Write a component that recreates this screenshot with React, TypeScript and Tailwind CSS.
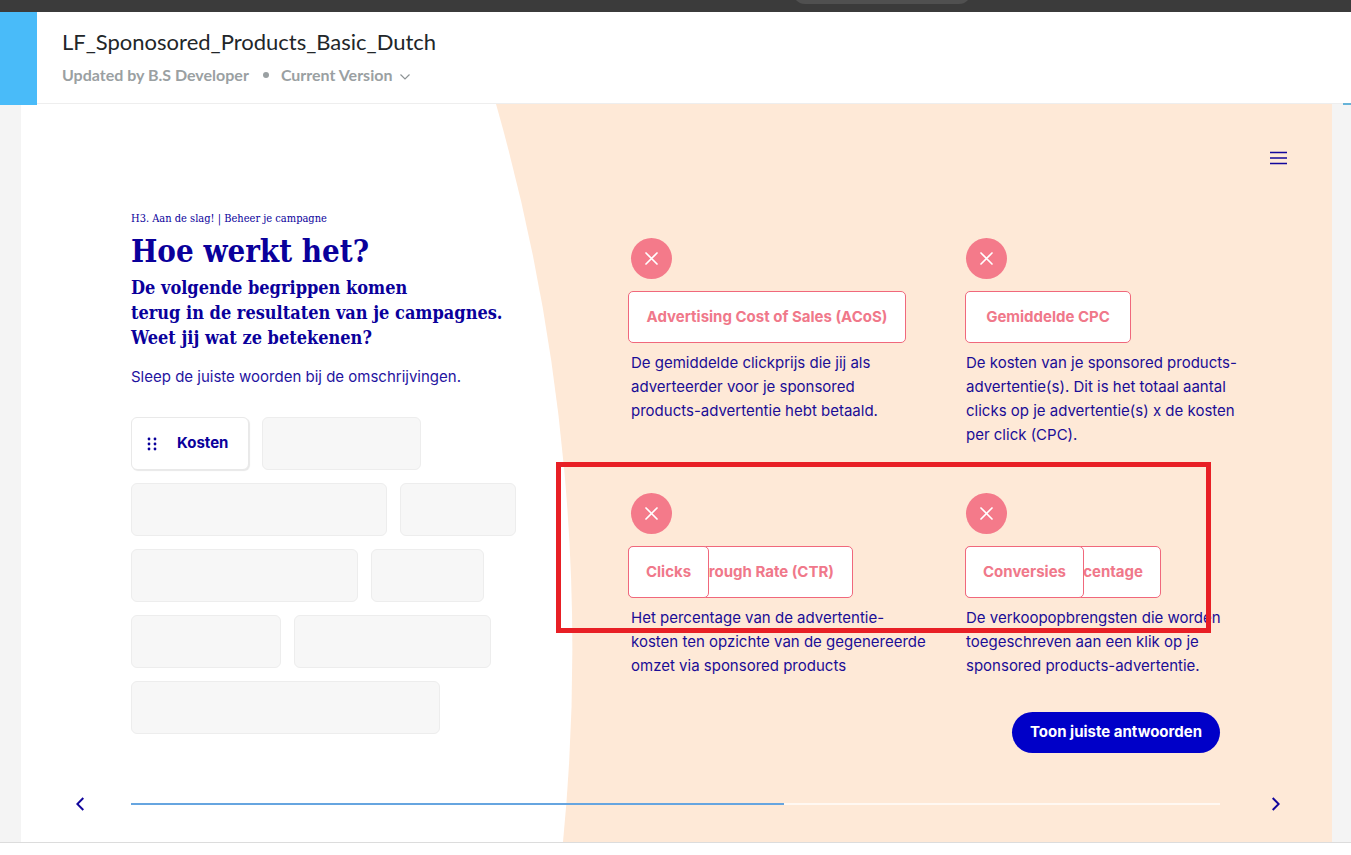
import type { ReactNode } from "react";

const slab = "font-['DejaVu_Serif_Condensed','DejaVu_Serif',serif]";

function Lines({ lines }: { lines: string[] }) {
  return (
    <>
      {lines.map((line) => (
        <span key={line} className="block whitespace-nowrap">
          {line}
        </span>
      ))}
    </>
  );
}

function Slot({ size }: { size: string }) {
  return <div className={`h-[53px] rounded-md border border-[#ededed] bg-[#f7f7f7] ${size}`} />;
}

function WrongBadge() {
  return (
    <span className="flex size-[41px] items-center justify-center rounded-full bg-[#f47a8a]">
      <svg viewBox="0 0 13 13" className="size-[13px]" fill="none" stroke="#fff" strokeWidth="1.7" strokeLinecap="round" aria-label="Onjuist">
        <path d="M1 1 12 12M12 1 1 12" />
      </svg>
    </span>
  );
}

function Answer({ size, children }: { size: string; children: ReactNode }) {
  return (
    <button
      type="button"
      className={`flex h-[52px] items-center whitespace-nowrap rounded-[5px] border border-[#f0687c] bg-white text-[15px] font-bold text-[#f0788a] ${size}`}
    >
      {children}
    </button>
  );
}

function Target({ inset, answer, lines }: { inset: string; answer: ReactNode; lines: string[] }) {
  return (
    <div className="flex flex-col gap-3">
      <div className={inset}>
        <WrongBadge />
      </div>
      <div className="relative flex">{answer}</div>
      <p className={`-mt-1 text-[15px] leading-6 text-[#1a0d96] ${inset}`}>
        <Lines lines={lines} />
      </p>
    </div>
  );
}

export default function App() {
  return (
    <div className="min-h-screen bg-white font-[Inter,sans-serif]">
      <div className="flex h-3 justify-center overflow-hidden bg-[#3b3b3b]">
        <div className="-mt-5 ml-[412px] h-6 w-[178px] rounded-xl bg-[#505050]" />
      </div>

      <header className="relative z-10 flex h-[92px] items-start border-b border-[#eeeeee] bg-white font-[Lato,sans-serif]">
        <div className="h-[93px] w-[37px] shrink-0 bg-[#49bbf9]" />
        <div className="flex-1 pl-[25px] pt-[15px]">
          <h1 className="text-[22px] leading-[30px] text-[#222629]">LF_Sponosored_Products_Basic_Dutch</h1>
          <div className="mt-[6px] flex items-center text-[16px] font-bold leading-6 text-[#9aa0a2]">
            <span>Updated by B.S Developer</span>
            <span className="ml-[14px] mr-3 size-[6px] rounded-full bg-[#9aa0a2]" />
            <button type="button" className="flex items-center gap-2">
              Current Version
              <svg viewBox="0 0 10 6" className="mt-1 h-[6px] w-[10px]" fill="none" stroke="#8d9395" strokeWidth="1.2">
                <path d="M.5.5 5 5 9.500.5" />
              </svg>
            </button>
          </div>
        </div>
        <div className="-mb-0.5 h-[2px] w-2 self-end bg-[#66b3d8]" />
      </header>

      <main className="border-b border-[#dcdcdc] bg-[#f4f4f4] pl-[21px] pr-[19px]">
        <div className="relative overflow-hidden bg-[#fee9d7] pb-[31px]">
          <svg viewBox="0 0 573 738" className="absolute left-0 top-0 h-full w-[573px]" preserveAspectRatio="none" aria-hidden="true">
            <path d="M0 0H475A1987 1987 0 0 1 542 738H0Z" fill="#fff" />
          </svg>

          <div className="relative">
            <div className="flex justify-end pr-[45px] pt-[47px]">
              <button type="button" aria-label="Menu" className="text-[#12069c]">
                <svg viewBox="0 0 17 14" className="h-[14px] w-[17px]" stroke="currentColor" strokeWidth="1.6">
                  <path d="M0 1.500H17M0 7H17M0 12.500H17" />
                </svg>
              </button>
            </div>

            <div className="flex pl-[110px] pt-[46px]">
              <section className="w-[497px] shrink-0 text-[#0a009b]">
                <p className={`text-[11px] leading-4 ${slab}`}>H3. Aan de slag! | Beheer je campagne</p>
                <h2 className={`mt-1 text-[31px] font-bold leading-10 ${slab}`}>Hoe werkt het?</h2>
                <h3 className={`mt-1 text-[18px] font-bold leading-[25px] ${slab}`}>
                  <Lines lines={["De volgende begrippen komen", "terug in de resultaten van je campagnes.", "Weet jij wat ze betekenen?"]} />
                </h3>
                <p className="mt-[15px] text-[15px] leading-6 text-[#1f149f]">Sleep de juiste woorden bij de omschrijvingen.</p>

                <div className="mt-7 flex flex-col gap-[13px]">
                  <div className="flex gap-[13px]">
                    <button type="button" className="flex h-[53px] w-[118px] items-center gap-5 rounded-md border border-[#e9e9e9] bg-white pl-[15px] text-[15px] font-bold shadow-[1px_1px_1px_#e8e8e8]">
                      <svg viewBox="0 0 10 14" className="h-[14px] w-[10px]" fill="currentColor" aria-hidden="true">
                        <circle cx="2" cy="2" r="1.400" />
                        <circle cx="8" cy="2" r="1.400" />
                        <circle cx="2" cy="7" r="1.400" />
                        <circle cx="8" cy="7" r="1.400" />
                        <circle cx="2" cy="12" r="1.400" />
                        <circle cx="8" cy="12" r="1.400" />
                      </svg>
                      Kosten
                    </button>
                    <Slot size="w-[159px]" />
                  </div>
                  <div className="flex gap-[13px]">
                    <Slot size="w-[256px]" />
                    <Slot size="w-[116px]" />
                  </div>
                  <div className="flex gap-[13px]">
                    <Slot size="w-[227px]" />
                    <Slot size="w-[113px]" />
                  </div>
                  <div className="flex gap-[13px]">
                    <Slot size="w-[150px]" />
                    <Slot size="w-[197px]" />
                  </div>
                  <Slot size="w-[309px]" />
                </div>
              </section>

              <section className="min-w-0 flex-1 pr-28 pt-[27px]">
                <div className="relative grid grid-cols-[337px_1fr] gap-y-[46px]">
                  <Target
                    inset="ml-[3px]"
                    answer={<Answer size="w-[278px] justify-center">Advertising Cost of Sales (ACoS)</Answer>}
                    lines={["De gemiddelde clickprijs die jij als", "adverteerder voor je sponsored", "products-advertentie hebt betaald."]}
                  />
                  <Target
                    inset="ml-px"
                    answer={<Answer size="w-[166px] justify-center">Gemiddelde CPC</Answer>}
                    lines={["De kosten van je sponsored products-", "advertentie(s). Dit is het totaal aantal", "clicks op je advertentie(s) x de kosten", "per click (CPC)."]}
                  />
                  <Target
                    inset="ml-[3px]"
                    answer={
                      <>
                        <Answer size="w-[225px] justify-end pr-[18px]">rough Rate (CTR)</Answer>
                        <Answer size="absolute left-0 top-0 w-[81px] justify-center">Clicks</Answer>
                      </>
                    }
                    lines={["Het percentage van de advertentie-", "kosten ten opzichte van de gegenereerde", "omzet via sponsored products"]}
                  />
                  <Target
                    inset="ml-px"
                    answer={
                      <>
                        <Answer size="w-[196px] justify-end pr-[17px]">centage</Answer>
                        <Answer size="absolute left-0 top-0 w-[119px] justify-center">Conversies</Answer>
                      </>
                    }
                    lines={["De verkoopopbrengsten die worden", "toegeschreven aan een klik op je", "sponsored products-advertentie."]}
                  />
                  <div className="pointer-events-none absolute -left-[72px] top-[224px] h-[171px] w-[655px] border-5 border-[#e81f25]" />
                </div>
                <div className="mt-[34px] flex justify-end">
                  <button type="button" className="h-[41px] w-[208px] whitespace-nowrap rounded-full bg-[#0000c8] text-[15px] font-bold text-white">
                    Toon juiste antwoorden
                  </button>
                </div>
              </section>
            </div>

            <nav className="mt-11 flex items-center pl-[55px] pr-[52px] text-[#12069c]" aria-label="Voortgang">
              <button type="button" aria-label="Vorige">
                <svg viewBox="0 0 8 14" className="h-[14px] w-2" fill="none" stroke="currentColor" strokeWidth="2">
                  <path d="M7.300 1 1.300 7 7.300 13" />
                </svg>
              </button>
              <div className="ml-[47px] mr-[52px] h-[2px] flex-1 bg-[#fff8f2]">
                <div className="h-full w-3/5 bg-[#66a5e0]" />
              </div>
              <button type="button" aria-label="Volgende">
                <svg viewBox="0 0 8 14" className="h-[14px] w-2" fill="none" stroke="currentColor" strokeWidth="2">
                  <path d="M.7 1 6.700 7 .7 13" />
                </svg>
              </button>
            </nav>
          </div>
        </div>
      </main>
    </div>
  );
}
